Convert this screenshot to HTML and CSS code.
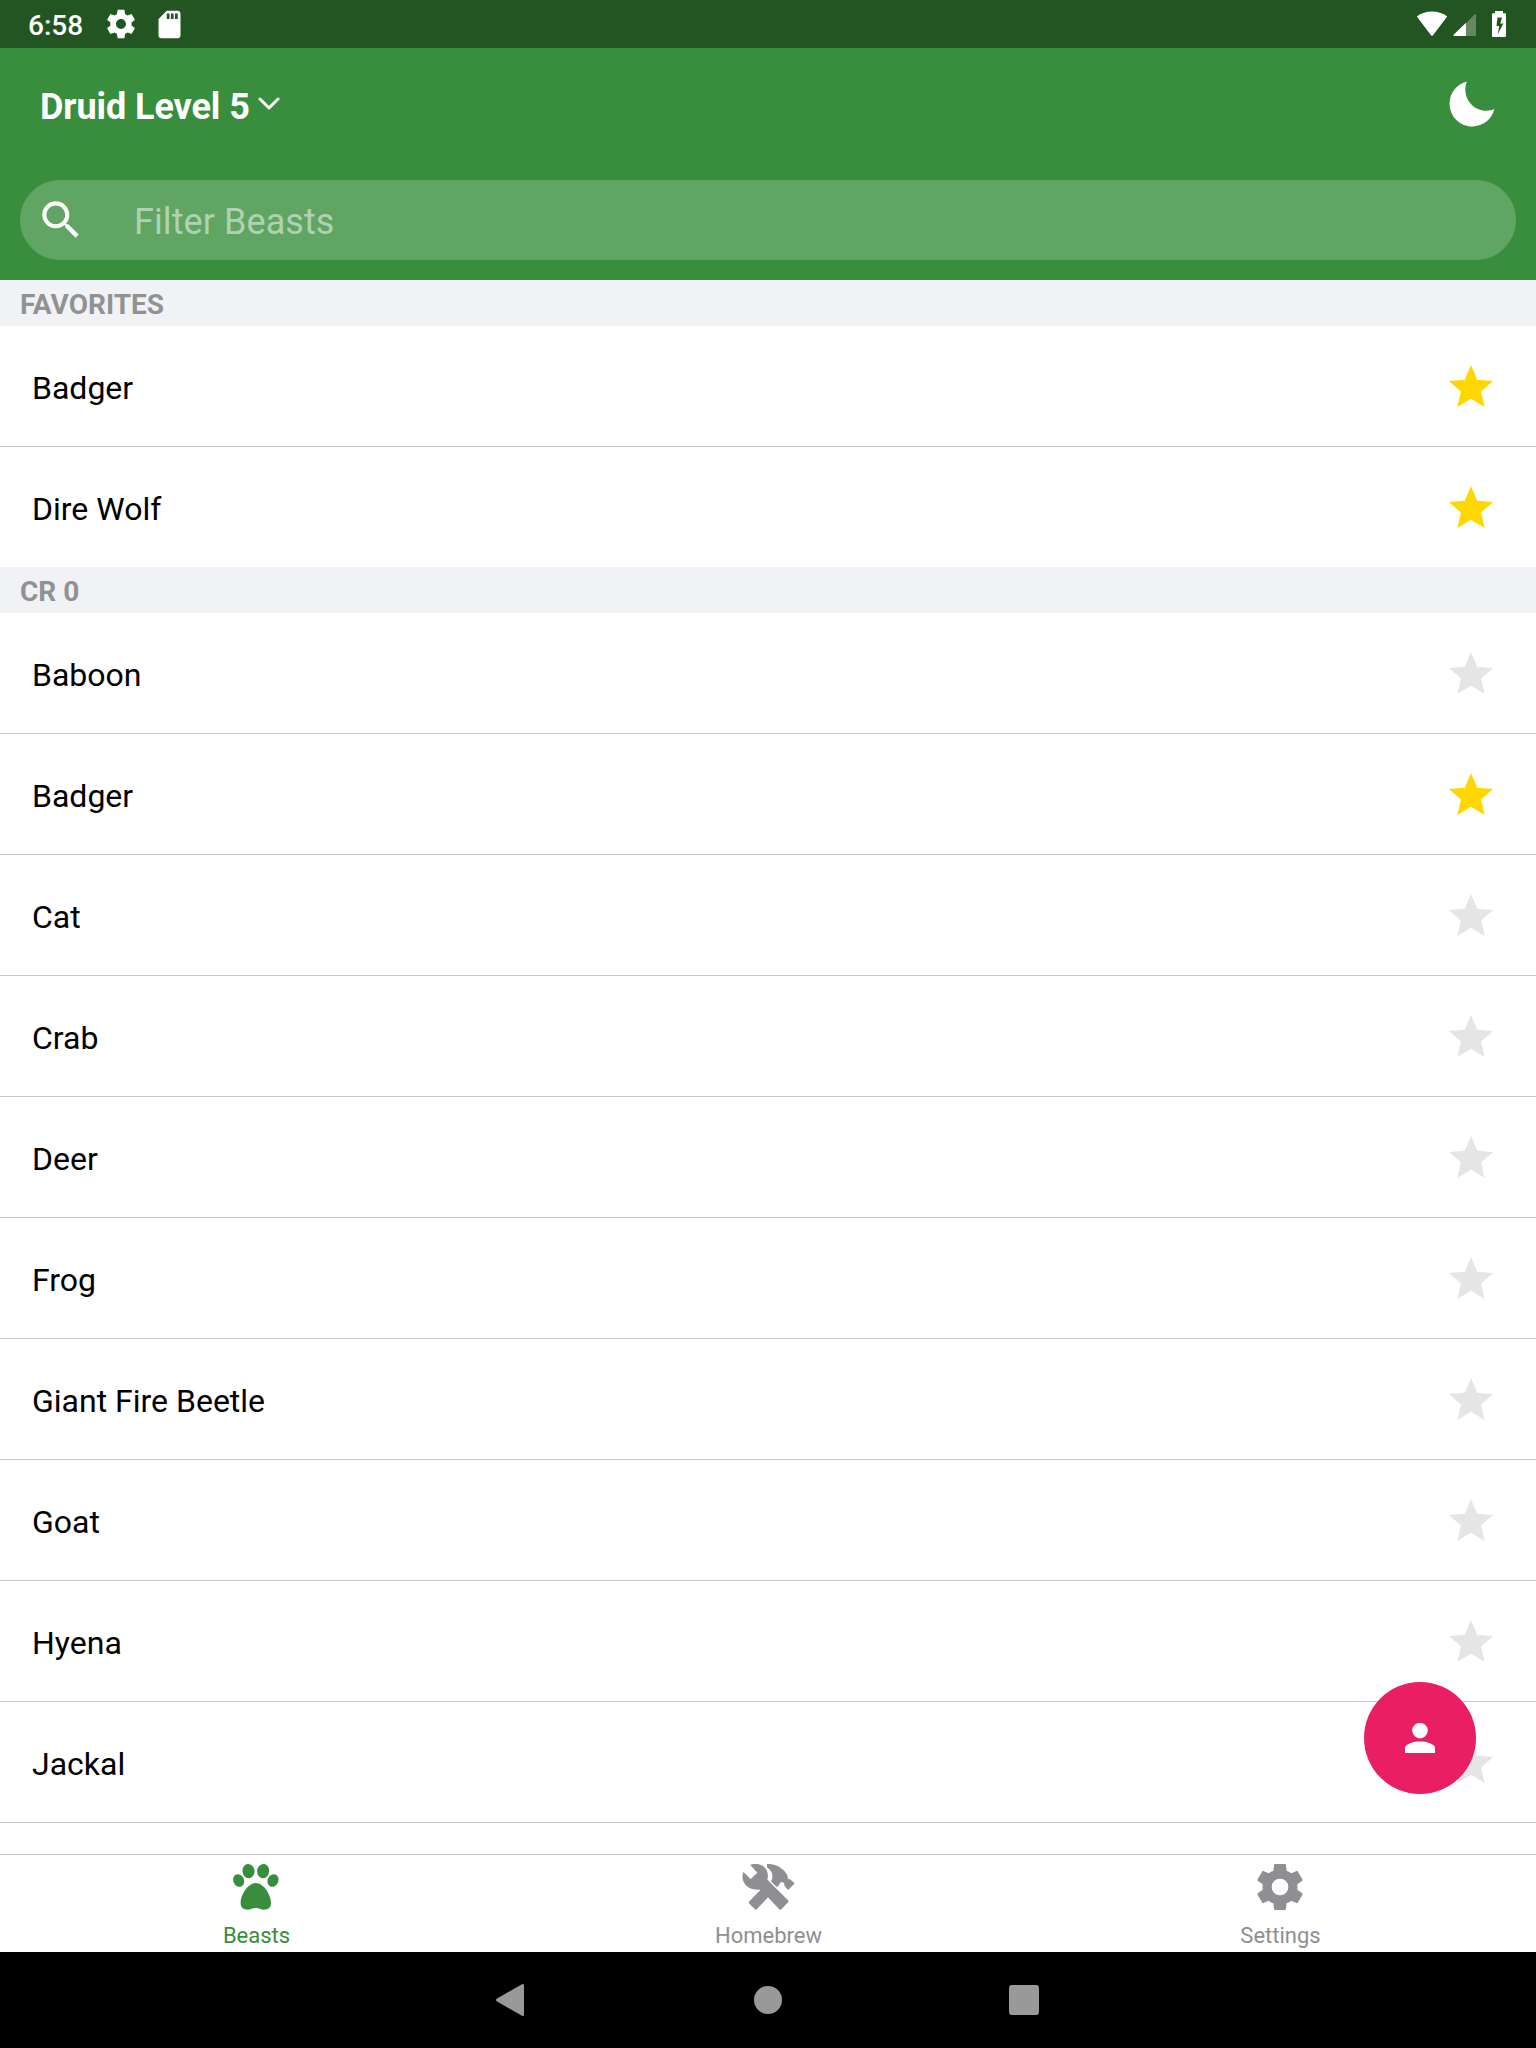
FILE: index.html
```html
<!DOCTYPE html>
<html lang="en">
<head>
<meta charset="utf-8">
<title>Druid Beasts</title>
<link rel="stylesheet" href="styles.css">
</head>
<body>
<svg class="sprite" aria-hidden="true">
  <symbol id="star" viewBox="0 0 512 512"><path d="M256 372.686L380.83 448l-33.021-142.066L458 210.409l-145.267-12.475L256 64l-56.743 133.934L54 210.409l110.192 95.525L131.161 448z"/></symbol>
</svg>
<div class="app">
  <div class="status">
    <span class="clock">6:58</span>
    <svg class="status-gear" width="34" height="34" viewBox="0 0 24 24"><path d="M19.43 12.98c.04-.32.07-.64.07-.98s-.03-.66-.07-.98l2.11-1.65c.19-.15.24-.42.12-.64l-2-3.46c-.12-.22-.39-.3-.61-.22l-2.49 1c-.52-.4-1.08-.73-1.69-.98l-.38-2.65C14.46 2.18 14.25 2 14 2h-4c-.25 0-.46.18-.49.42l-.38 2.65c-.61.25-1.17.59-1.69.98l-2.49-1c-.23-.09-.49 0-.61.22l-2 3.46c-.13.22-.07.49.12.64l2.11 1.65c-.04.32-.07.65-.07.98s.03.66.07.98l-2.11 1.65c-.19.15-.24.42-.12.64l2 3.46c.12.22.39.3.61.22l2.49-1c.52.4 1.08.73 1.69.98l.38 2.65c.03.24.24.42.49.42h4c.25 0 .46-.18.49-.42l.38-2.65c.61-.25 1.17-.59 1.69-.98l2.49 1c.23.09.49 0 .61-.22l2-3.46c.12-.22.07-.49-.12-.64l-2.11-1.65zM12 15.5c-1.93 0-3.5-1.57-3.5-3.5s1.570-3.500 3.500-3.500 3.500 1.570 3.500 3.500-1.570 3.500-3.500 3.500z"/></svg>
    <svg class="status-card" width="33" height="33" viewBox="0 0 24 24"><path d="M18 2h-8L4.020 8 4 20c0 1.100.9 2 2 2h12c1.100 0 2-.9 2-2V4c0-1.100-.9-2-2-2zm-6 6h-2V4h2v4zm3 0h-2V4h2v4zm3 0h-2V4h2v4z"/></svg>
    <svg class="status-right" width="92" height="28" viewBox="0 0 92 28">
      <path d="M0.800 6.500C9.500-.1 22.500-.1 31.200 6.500L17 25.300q-1 1.200-2 0z"/>
      <path d="M50 13.200L58.500 4.500Q60 3.300 60 5V25Q60 26 59 26H50Z" opacity=".3"/>
      <path d="M50 12.800V26H38.300q-1.600-.3-.5-1.500z"/>
      <path fill-rule="evenodd" d="M79 1h8v2.300h2q1 0 1 1V26q0 1-1 1H77q-1 0-1-1V4.300q0-1 1-1h2zM81.500 7.400l-1 8.600h2.700l-1.500 8.500 5.600-11h-3l1.700-6.100z"/>
    </svg>
  </div>

  <header class="header">
    <div class="title-row">
      <div class="title">Druid Level 5</div>
      <svg class="chevron" width="22" height="14" viewBox="0 0 22 14"><path d="M2 2l9 9 9-9"/></svg>
      <svg class="moon" width="56" height="56" viewBox="0 0 512 512"><path d="M195 125c0-26.300 5.300-51.300 14.900-74.100C118.700 73 51 155.100 51 253c0 114.800 93.200 208 208 208 97.900 0 180-67.700 202.100-158.900-22.800 9.600-47.900 14.900-74.100 14.900-106 0-192-86-192-192z"/></svg>
    </div>
    <div class="search">
      <svg width="50" height="50" viewBox="0 0 24 24"><path d="M15.500 14h-.79l-.28-.27C15.410 12.590 16 11.110 16 9.500 16 5.910 13.090 3 9.500 3S3 5.910 3 9.500 5.910 16 9.500 16c1.610 0 3.090-.59 4.230-1.570l.27.28v.79l5 4.990L20.490 19l-4.990-5zm-6 0C7.010 14 5 11.990 5 9.500S7.010 5 9.500 5 14 7.010 14 9.500 11.990 14 9.500 14z"/></svg>
      <span>Filter Beasts</span>
    </div>
  </header>

  <main class="list">
    <h2 class="section">FAVORITES</h2>
    <ul class="rows">
      <li class="row">Badger<svg class="star on"><use href="#star"/></svg></li>
      <li class="row">Dire Wolf<svg class="star on"><use href="#star"/></svg></li>
    </ul>
    <h2 class="section">CR 0</h2>
    <ul class="rows">
      <li class="row">Baboon<svg class="star"><use href="#star"/></svg></li>
      <li class="row">Badger<svg class="star on"><use href="#star"/></svg></li>
      <li class="row">Cat<svg class="star"><use href="#star"/></svg></li>
      <li class="row">Crab<svg class="star"><use href="#star"/></svg></li>
      <li class="row">Deer<svg class="star"><use href="#star"/></svg></li>
      <li class="row">Frog<svg class="star"><use href="#star"/></svg></li>
      <li class="row">Giant Fire Beetle<svg class="star"><use href="#star"/></svg></li>
      <li class="row">Goat<svg class="star"><use href="#star"/></svg></li>
      <li class="row">Hyena<svg class="star"><use href="#star"/></svg></li>
      <li class="row">Jackal<svg class="star"><use href="#star"/></svg></li>
      <li class="row"></li>
    </ul>
    <div class="fab">
      <svg width="30" height="30" viewBox="0 0 30 30"><circle cx="15" cy="7.600" r="7.800"/><path d="M0 30v-6C2 20.500 8.500 18.500 15 18.500S28 20.500 30 24v6z"/></svg>
    </div>
  </main>

  <nav class="tabs">
    <div class="tab active">
      <svg width="46" height="46" viewBox="159 72 138 138">
        <ellipse cx="205.500" cy="93.500" rx="18" ry="21.500" transform="rotate(-8 205.500 93.500)"/>
        <ellipse cx="249.500" cy="93.500" rx="18" ry="21.500" transform="rotate(8 249.500 93.500)"/>
        <ellipse cx="176" cy="121.500" rx="16" ry="19.500" transform="rotate(-24 176 121.500)"/>
        <ellipse cx="279" cy="121.500" rx="16" ry="19.500" transform="rotate(24 279 121.500)"/>
        <path d="M227.500 129C205 129 182 163 182 190c0 13 8 19 21 19 10 0 15-5 24.500-5s14.500 5 24.500 5c13 0 21-6 21-19 0-27-23-61-45.500-61z"/>
      </svg>
      <span>Beasts</span>
    </div>
    <div class="tab">
      <svg width="53" height="46" viewBox="155 72 159 138">
        <path d="M180 75C188 71 203 70 214 76 230 84 236 102 231 119L293 181q3 3 0 6L274 207q-4 4-8 0L233 172 200 207q-3 4-7 0L177 191q-3-4 0-7L211 149C196 151 177 147 166 135 156 124 154 108 159 96L181 117 201 98Z"/>
        <path d="M230 72C256 70 281 85 292 108V116L299 118 313 130 294 150 283 139 281 130C278 125 270 126 268 130L267 135 259 141 242 124C251 109 247 94 230 82Z"/>
      </svg>
      <span>Homebrew</span>
    </div>
    <div class="tab">
      <svg width="46" height="46" viewBox="170 72 138 138">
        <path fill-rule="evenodd" d="M224 72H254Q256 72 256.500 74L259 92Q267 95 273 100L289 93Q291 92 292 94L306 118Q307 120 306 122L291 133Q292 141 291 149L306 160Q307 162 306 164L292 188Q291 190 289 189L273 182Q267 187 259 190L256.500 208Q256 210 254 210H224Q222 210 221.500 208L219 190Q211 187 205 182L189 189Q187 190 186 188L172 164Q171 162 172 160L187 149Q186 141 187 133L172 122Q171 120 172 118L186 94Q187 92 189 93L205 100Q211 95 219 92L221.500 74Q222 72 224 72ZM239 116a25 25 0 1 0 0 50a25 25 0 1 0 0-50Z"/>
      </svg>
      <span>Settings</span>
    </div>
  </nav>

  <div class="sysnav">
    <svg width="31" height="36" viewBox="0 0 31 36"><path d="M.7 16.800L26 2.200q2-1 2 1.200V32.600q0 2.200-2 1.200L.7 19.200q-1.400-1.200 0-2.400z"/></svg>
    <svg width="28" height="28" viewBox="0 0 28 28"><circle cx="14" cy="14" r="14"/></svg>
    <svg width="30" height="30" viewBox="0 0 30 30"><rect width="30" height="30" rx="3"/></svg>
  </div>
</div>
</body>
</html>
```
FILE: styles.css
```css
* { box-sizing: border-box; }
body { margin: 0; font-family: Roboto, "Liberation Sans", sans-serif; background: #fff; }
svg { display: block; fill: currentColor; flex: none; }
.sprite { display: none; }
.app { display: flex; flex-direction: column; width: 1536px; height: 2048px; overflow: hidden; }

.status { display: flex; align-items: center; height: 48px; flex: none; padding: 0 28px; background: #225522; color: #fff; }
.clock { width: 76px; font-size: 28px; font-weight: 500; line-height: 32px; padding-top: 3px; }
.status-card { margin-left: 14.5px; }
.status-right { margin-left: auto; }

.header { flex: none; height: 232px; padding: 0 20px 20px; background: #388e3c; color: #fff; display: flex; flex-direction: column; justify-content: space-between; }
.title-row { display: flex; align-items: center; height: 112px; padding: 0 16.5px 0 20px; }
.title { font-size: 36px; font-weight: 700; line-height: 44px; padding-top: 6px; letter-spacing: -0.08px; }
.chevron { fill: none; stroke: #fff; stroke-width: 3; stroke-linecap: round; stroke-linejoin: round; margin-left: 8px; }
.moon { margin-left: auto; }
.search { display: flex; align-items: center; height: 80px; padding-left: 16px; border-radius: 40px; background: #60a563; }
.search span { margin-left: 48px; padding-top: 3px; font-size: 36px; line-height: 44px; letter-spacing: 0.08px; color: #afd2b1; }

.list { position: relative; flex: 1; min-height: 0; overflow: hidden; }
.section { margin: 0; height: 46px; padding: 3px 20px 0; background: #f1f2f6; color: #929292; font-size: 28px; font-weight: 700; line-height: 44px; }
.rows { list-style: none; margin: 0; padding: 0; }
.row { display: flex; align-items: center; justify-content: space-between; height: 121px; padding: 4px 37px 0 32px; border-bottom: 1px solid #c8c7cc; font-size: 32px; color: #000; }
.row:last-child { height: 120px; border-bottom: 0; }
.star { width: 56px; height: 56px; margin-top: -4px; color: #e5e5e5; }
.star.on { color: #ffd700; }
.fab { position: absolute; right: 60px; bottom: 60px; width: 112px; height: 112px; border-radius: 50%; background: #e91e63; color: #fff; display: flex; align-items: center; justify-content: center; }

.tabs { flex: none; display: flex; height: 98px; border-top: 1px solid #c8c7cc; background: #fff; color: #8e8e93; }
.tab { flex: 1; display: flex; flex-direction: column; align-items: center; padding-top: 9px; gap: 13px; font-size: 22px; line-height: 26px; }
.tab span { padding-left: 1px; }
.tab.active { color: #388e3c; }

.sysnav { flex: none; display: flex; align-items: center; justify-content: center; gap: 227px; height: 96px; padding-right: 1px; background: #000; color: #999; }
```
